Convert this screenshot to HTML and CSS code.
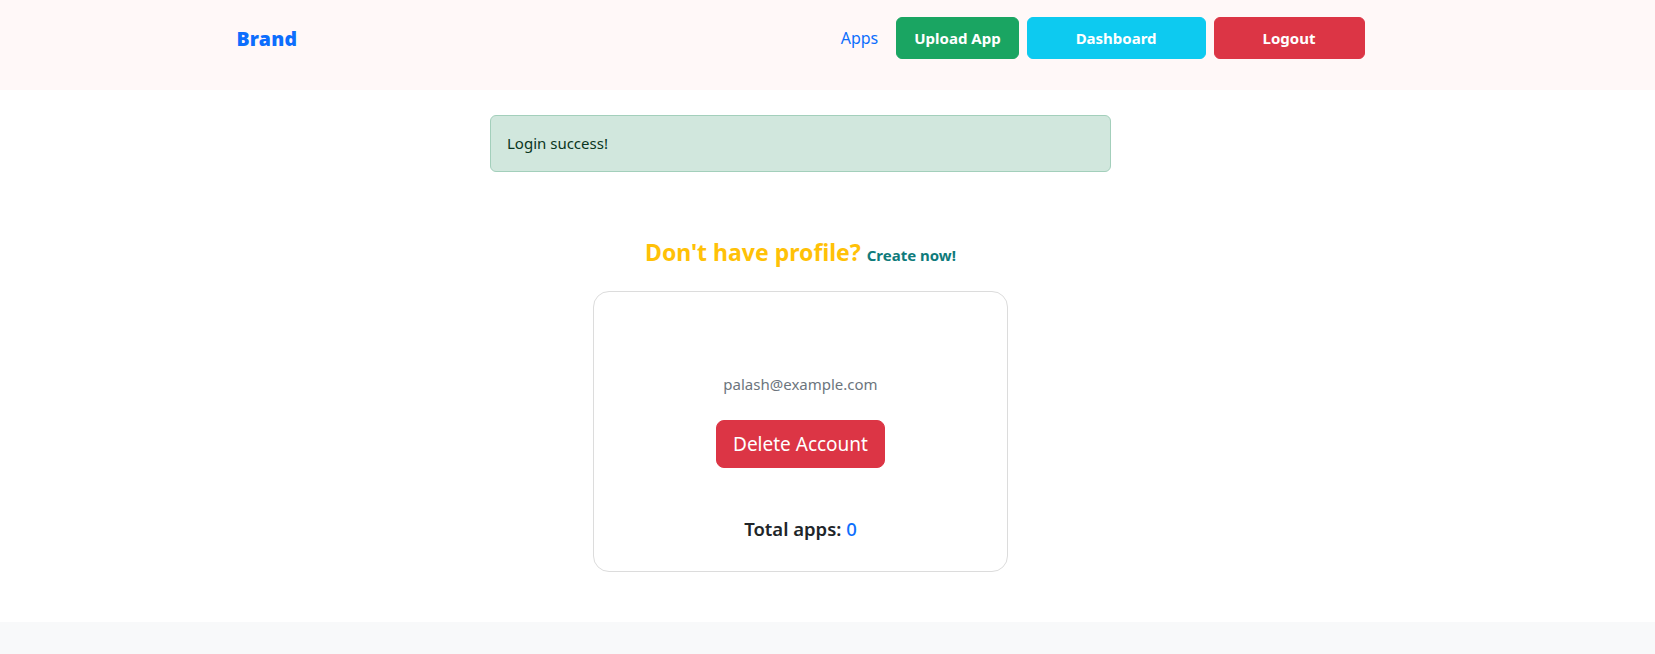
FILE: index.html
```html
<!DOCTYPE html>
<html lang="en">
<head>
<meta charset="utf-8">
<title>Profile</title>
<link rel="stylesheet" href="styles.css">
</head>
<body>
<nav class="navbar">
  <div class="stage">
    <div class="nav-inner">
      <a class="brand" href="#">Brand</a>
      <div class="nav-right">
        <a class="nav-link" href="#">Apps</a>
        <a class="btn btn-success" href="#">Upload App</a>
        <a class="btn btn-info btn-wide" href="#">Dashboard</a>
        <a class="btn btn-danger btn-wide" href="#">Logout</a>
      </div>
    </div>
  </div>
</nav>
<main class="stage main">
  <div class="alert">Login success!</div>
  <h4 class="prompt">Don't have profile? <a class="create" href="#">Create now!</a></h4>
  <div class="card">
    <p class="email">palash@example.com</p>
    <button class="btn-lg" type="button">Delete Account</button>
    <h5 class="total">Total apps: <span class="count">0</span></h5>
  </div>
</main>
<footer class="footer"></footer>
</body>
</html>
```

FILE: styles.css
```css
* { box-sizing: border-box; }
html, body { margin: 0; padding: 0; }
body {
  font-family: "Noto Sans", "Open Sans", sans-serif;
  font-size: 16px;
  line-height: 1.5;
  color: #212529;
  background: #fff;
}
a { text-decoration: none; }

.stage {
  width: calc(100% - 54px);
}

.navbar {
  background: #fff8f8;
  padding: 17px 0 31px;
}
.nav-inner {
  width: 1128px;
  margin: 0 auto;
  display: flex;
  align-items: center;
  justify-content: space-between;
}
.brand {
  font-family: "Noto Sans", sans-serif;
  font-weight: 900;
  font-size: 19.5px;
  color: #0d6efd;
  line-height: 1.2;
  letter-spacing: 0.2px;
  padding-top: 2px;
}
.nav-right {
  display: flex;
  align-items: center;
  gap: 8px;
}
.nav-link {
  color: #0d6efd;
  font-size: 16px;
  margin-right: 10px;
}
.btn {
  display: inline-block;
  padding: 8px 17px;
  border: 1px solid transparent;
  border-radius: 6px;
  color: #fff;
  font-weight: 700;
  font-size: 15px;
  line-height: 24px;
}
.btn-wide { padding: 8px 48px; }
.btn-success { background: #1aa562; border-color: #1aa562; }
.btn-info { background: #0dcaf0; border-color: #0dcaf0; }
.btn-danger { background: #dc3545; border-color: #dc3545; }

.main {
  display: flex;
  flex-direction: column;
  align-items: center;
}
.alert {
  width: 621px;
  margin-top: 25px;
  padding: 16px;
  background: #d1e7dd;
  border: 1px solid #a3cfbb;
  border-radius: 6px;
  color: #0a3622;
  font-size: 15px;
}
.prompt {
  margin: 66px 0 22px;
  font-size: 23px;
  line-height: 28.8px;
  font-weight: 700;
  color: #ffc107;
}
.create {
  font-size: 15px;
  color: #0f7b7b;
}
.card {
  width: 415px;
  border: 1px solid #dcdcdc;
  border-radius: 16px;
  padding: 80px 16px 27px;
  display: flex;
  flex-direction: column;
  align-items: center;
}
.email {
  margin: 0;
  color: #6c757d;
  font-size: 15px;
  line-height: 24px;
}
.btn-lg {
  margin-top: 24px;
  font-family: inherit;
  background: #dc3545;
  border: 1px solid #dc3545;
  color: #fff;
  border-radius: 8px;
  padding: 8px 16px;
  font-size: 19px;
  line-height: 30px;
}
.total {
  margin: 46px 0 0;
  font-size: 18.5px;
  line-height: 30px;
  font-weight: 600;
  color: #212529;
}
.count {
  color: #0d6efd;
  font-weight: 500;
}
.footer {
  margin-top: 50px;
  background: #f8f9fa;
  height: 60px;
}
```
